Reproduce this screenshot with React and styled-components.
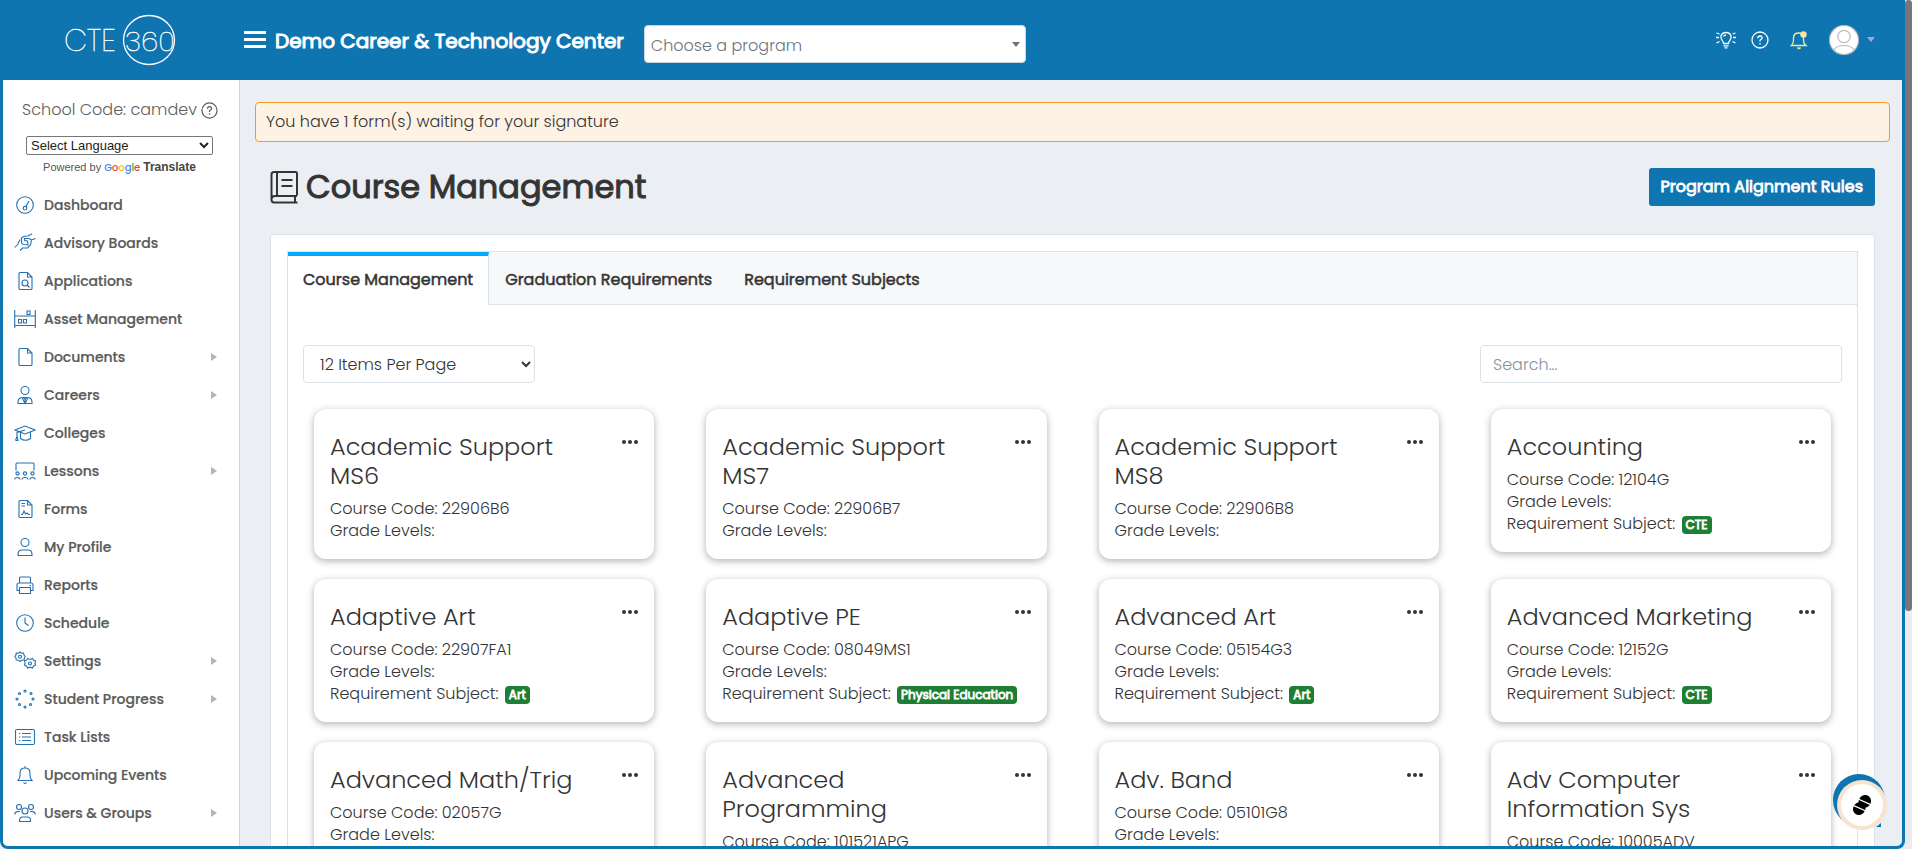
import React, { useState } from 'react';
import styled, { createGlobalStyle } from 'styled-components';

const GlobalStyle = createGlobalStyle`
  *, *::before, *::after {
    box-sizing: border-box;
  }

  body {
    margin: 0;
    background: #e9edf2;
    color: #343434;
    font-family: Poppins, Inter, "Open Sans", sans-serif;
    font-size: 16px;
    font-weight: 300;
    line-height: 24px;
  }

  button, input, select {
    font: inherit;
    color: inherit;
  }

  h1, h2, p, ul {
    margin: 0;
    padding: 0;
  }
`;

const Viewport = styled.div`
  display: flex;
  height: 100vh;
  overflow: hidden;
`;

const Frame = styled.div`
  flex: 1;
  min-width: 0;
  display: flex;
  flex-direction: column;
  border: solid #0f75b1;
  border-width: 0 3px 3px;
  border-radius: 0 0 8px 8px;
  background: #ebeef3;
  overflow: hidden;
`;

const ScrollTrack = styled.div`
  width: 7px;
`;

const ScrollThumb = styled.div`
  height: 72%;
  border-radius: 4px;
  background: #75767b;
`;

const Header = styled.header`
  flex: none;
  display: flex;
  align-items: center;
  height: 80px;
  padding-right: 27px;
  border-bottom: 1px solid #3b5bb5;
  background: #0f75b1;
  color: #fff;
`;

const Brand = styled.a`
  display: flex;
  justify-content: center;
  width: 237px;
  padding-right: 4px;

  text {
    font-family: Poppins, Lato, sans-serif;
    font-weight: 200;
    fill: #fff;
    stroke: #fff;
    stroke-width: 0.4px;
  }
`;

const MenuButton = styled.button`
  display: grid;
  gap: 4px;
  width: 30px;
  padding: 0 4px;
  border: 0;
  background: none;

  span {
    height: 3px;
    background: #fff;
  }
`;

const SchoolName = styled.span`
  padding: 3px 20px 0 5px;
  font-size: 20px;
  font-weight: 400;
  -webkit-text-stroke: 1px;
  white-space: nowrap;
`;

const ProgramSelect = styled.div`
  position: relative;
  width: 382px;
  margin-top: 8px;

  select {
    width: 100%;
    height: 38px;
    padding: 4px 6px 0;
    appearance: none;
    border: 1px solid #c9d6de;
    border-radius: 4px;
    background: #fff;
    color: #6c757d;
  }
`;

const Caret = styled.span`
  border: solid transparent;
  border-width: 5px 4px 0;
  border-top-color: ${(props) => props.$color};
`;

const SelectCaret = styled(Caret)`
  position: absolute;
  top: 17px;
  right: 6px;
  pointer-events: none;
`;

const HeaderTools = styled.div`
  display: flex;
  align-items: center;
  gap: 21px;
  margin-left: auto;
`;

const ToolGroup = styled.div`
  display: flex;
  align-items: center;
  gap: 14px;
`;

const ToolButton = styled.button`
  display: flex;
  align-items: center;
  gap: 8px;
  padding: 0;
  border: 0;
  background: none;
  color: #fff;
`;

const Body = styled.div`
  flex: 1;
  min-height: 0;
  display: flex;
`;

const Sidebar = styled.aside`
  flex: none;
  width: 237px;
  padding-top: 18px;
  border-right: 1px solid #c5d6de;
  background: #fff;
  color: #5a5a5a;
`;

const SchoolCode = styled.p`
  display: flex;
  align-items: center;
  justify-content: center;
  gap: 4px;
  padding-right: 2px;
  color: #5e5e5e;
`;

const Translate = styled.div`
  padding: 14px 26px 0 23px;
  font-family: "Liberation Sans", Arial, sans-serif;
  font-size: 11px;
  font-weight: 400;
  line-height: 24px;
  text-align: center;
  color: #555;

  select {
    display: block;
    width: 100%;
    height: 19px;
    border: 1px solid #767676;
    border-radius: 2px;
    background: #fff;
    color: #222;
    font-size: 13px;
    line-height: 16px;
  }

  b {
    font-size: 12px;
    color: #444;
  }
`;

const GoogleWord = styled.span`
  margin: 0 3px;
  font-family: Poppins, Inter, sans-serif;
  font-size: 10px;
  font-weight: 500;
`;

const Letter = styled.span`
  color: ${(props) => props.$color};
`;

const NavList = styled.ul`
  list-style: none;
  padding-top: 6px;
`;

const NavLink = styled.a`
  display: flex;
  align-items: center;
  gap: 8px;
  height: 38px;
  padding: 0 22px 0 11px;
  color: #5a5a5a;
  font-size: 14px;
  font-weight: 500;
  -webkit-text-stroke: 0.2px;
  text-decoration: none;
`;

const NavIcon = styled.svg`
  flex: none;
  width: 22px;
  height: 20px;
  fill: none;
  stroke: #2470b0;
  stroke-width: 1.1;
`;

const NavArrow = styled.span`
  margin-left: auto;
  border: solid transparent;
  border-width: 4px 0 4px 6px;
  border-left-color: #adb7be;
`;

const Main = styled.main`
  flex: 1;
  min-width: 0;
  padding: 22px 12px 0 15px;
  overflow: hidden;
`;

const Alert = styled.div`
  padding: 7px 10px;
  border: 1px solid #f39a22;
  border-radius: 4px;
  background: #fdf2e4;
`;

const Content = styled.section`
  padding: 26px 15px 0;
`;

const TitleRow = styled.div`
  display: flex;
  align-items: center;
  justify-content: space-between;
  margin-bottom: 28px;
`;

const PageTitle = styled.h1`
  display: flex;
  align-items: center;
  gap: 8px;
  font-size: 32px;
  font-weight: 400;
  -webkit-text-stroke: 1px;
  line-height: 38px;
`;

const PrimaryButton = styled.button`
  height: 38px;
  padding: 0 12px;
  border: 0;
  border-radius: 3px;
  background: #0f75b1;
  color: #fff;
  font-weight: 400;
  -webkit-text-stroke: 0.8px;
`;

const Panel = styled.div`
  padding: 16px;
  border: 1px solid #d8e2e7;
  border-radius: 4px;
  background: #fff;
`;

const Tabs = styled.div`
  display: flex;
  gap: 1px;
  border: 1px solid #d8e2e7;
  border-bottom: 0;
  background: #f6f8fa;
  box-shadow: inset 0 -1px #d8e2e7;
`;

const Tab = styled.button`
  height: 53px;
  padding: 0 15px 2px;
  border: solid transparent;
  border-width: 4px 1px 0 0;
  background: none;
  font-weight: 400;
  -webkit-text-stroke: 0.5px;

  &[aria-selected='true'] {
    border-color: #00a8ff #d8e2e7 transparent;
    background: #fff;
  }
`;

const TabPanel = styled.div`
  padding-top: 40px;
  border: solid #d8e2e7;
  border-width: 0 1px;
`;

const Filters = styled.div`
  display: flex;
  justify-content: space-between;
  padding: 0 15px;
`;

const PageSize = styled.select`
  width: 232px;
  height: 38px;
  padding: 0 0 0 12px;
  border: 1px solid #d8e2e7;
  border-radius: 4px;
  background: #fff;
`;

const SearchInput = styled.input`
  width: 362px;
  height: 38px;
  padding: 0 12px;
  border: 1px solid #d8e2e7;
  border-radius: 4px;

  &::placeholder {
    color: #84949e;
    opacity: 1;
  }
`;

const CardGrid = styled.div`
  display: grid;
  grid-template-columns: repeat(4, minmax(0, 1fr));
  align-items: start;
  gap: 20px 52px;
  padding: 26px;
`;

const Card = styled.article`
  display: flex;
  align-items: flex-start;
  justify-content: space-between;
  padding: 23px 16px 17px;
  border-radius: 12px;
  box-shadow: 0 2px 6px 1px rgba(80, 95, 110, 0.38);
`;

const CardTitle = styled.h2`
  margin-bottom: 8px;
  max-width: 250px;
  font-size: 24px;
  font-weight: 300;
  line-height: 29px;
`;

const CardLine = styled.p`
  line-height: 22px;
  white-space: nowrap;
`;

const Badge = styled.span`
  display: inline-block;
  margin-left: 2px;
  padding: 0 4px;
  border-radius: 4px;
  background: #1e7e34;
  color: #fff;
  font-size: 12px;
  font-weight: 400;
  -webkit-text-stroke: 0.8px;
  line-height: 18px;
`;

const MoreButton = styled.button`
  display: flex;
  gap: 2px;
  margin: 8px 0 0 -32px;
  padding: 0;
  border: 0;
  background: none;

  span {
    width: 4px;
    height: 4px;
    border-radius: 50%;
    background: #343434;
  }
`;

const HelpWidget = styled.button`
  position: fixed;
  right: 25px;
  bottom: 18px;
  width: 54px;
  height: 57px;
  padding: 0;
  border: 0;
  background: none;
`;

const icons = {
  dashboard: (
    <>
      <circle cx="11" cy="10" r="8.3" />
      <circle cx="11" cy="13.2" r="1.8" />
      <path d="M11.8 11.6 15 6.2" />
    </>
  ),
  boards: (
    <path d="M.8 14.5 4 11 6 6.5M9.5 3.5l4-.5L17 1.5l.8-1M9.5 3.5l-2 1.5v4q0 2 2 2.500l4.500.5-.5-4-3-.5v-2H15L17.500 7l4-1.500M17.500 7l-1 5-3 3h-5L6 17.500" />
  ),
  applications: (
    <>
      <path d="M6 1.5h7.5L18 6v11.5q0 1-1 1H6q-1 0-1-1v-15q0-1 1-1zM13.5 1.5V6H18" />
      <circle cx="11" cy="12" r="3" />
      <path d="m13 14 2.5 2.5" />
    </>
  ),
  assets: <path d="M.7 1v18M21.3 1v18M.7 7h20.6M.7 16.5h20.6M13 2h3v3.5h-3zM4.5 10.5h3V14h-3zM9.5 10.5h3V14h-3z" />,
  documents: <path d="M6 1.5h7.5L18 6v11.5q0 1-1 1H6q-1 0-1-1v-15q0-1 1-1zM13.5 1.5V6H18" />,
  careers: (
    <>
      <circle cx="11" cy="5.5" r="4" />
      <path d="M4 18.5V17q0-4 4-4.5l3 6 3-6q4 .5 4 4.5v1.5zM9.5 12.5h3L11 14.5zM11 14.5v3" />
    </>
  ),
  colleges: (
    <path d="M1 7 11 3l10 4-10 4zM6.5 9.5v6q5 3.5 10 0v-6M11 7 3 9.5v4l-1.5 4M3 13.5l1 4H1.5" />
  ),
  lessons: (
    <>
      <path d="M2 9.5V3q0-1 1-1h16q1 0 1 1v6.5" />
      <circle cx="3.5" cy="12.5" r="1.6" />
      <circle cx="11" cy="12.5" r="1.6" />
      <circle cx="18.5" cy="12.5" r="1.6" />
      <path d="M.7 18.5q0-2 2.5-2t2.8 2M8 18.5q0-2 3-2t3 2M16 18.5q0-2 2.5-2t2.8 2" />
    </>
  ),
  forms: <path d="M6 1.5h7.5L18 6v11.5q0 1-1 1H6q-1 0-1-1v-15q0-1 1-1zM13.5 1.5V6H18M7.5 4.5H11M7.5 7H11M7 15.5h1.5l1.5-3.5 1.5 3 1.5-1 1.5 1.5H16" />,
  profile: (
    <>
      <circle cx="11" cy="5.5" r="4" />
      <path d="M4 18.5v-1q0-4.5 4-4.5h6q4 0 4 4.5v1z" />
    </>
  ),
  reports: <path d="M5.5 8V3q0-1 1-1h9q1 0 1 1v5M5.5 15.5H3V10q0-2 2-2h12q2 0 2 2v5.5h-2.5M5.5 12.5h11v6h-11zM15.5 10.5H17" />,
  schedule: (
    <>
      <circle cx="11" cy="10" r="8.3" />
      <path d="M11 4.5V10l3.5 2.5" />
    </>
  ),
  settings: (
    <>
      <path d="m6 1 1.5 1.2 2-.2.5 2 1.2 1.5L10.5 7l-.5 2-2 .2-2 1.3-1.500-1.300L2.200 9 2 7 .8 5.500 2 4l.2-2 2.300.2z" />
      <circle cx="6" cy="5.7" r="1.5" />
      <path d="m13.5 7.5 1.8.8h1.5l1.7-.8 1.2 1.7 1.8.5-.5 2.5.5 2-2 .8-1 2-1.8-.6h-1.5l-1.7.6-1-2-2-.8.5-2-.5-2.5 1.8-.5z" />
      <circle cx="16" cy="12.5" r="1.5" />
    </>
  ),
  progress: (
    <>
      {[[11, 2], [17, 4.5], [19, 10], [16.5, 15.5], [11, 18], [5.5, 15.5], [3, 10], [5.5, 4.5]].map(([x, y]) => (
        <circle key={`${x}-${y}`} cx={x} cy={y} r="1" />
      ))}
    </>
  ),
  tasks: (
    <>
      <rect x="1.5" y="2.5" width="19" height="15" rx="1.5" />
      <path d="M8 6.5h9M8 10h9M8 13.5h9M5 6.5h1.2M5 10h1.2M5 13.5h1.2" />
    </>
  ),
  bell: <path d="M11 1v2M4 15.5q2-2 2-5V8q0-5 5-5t5 5v2.5q0 3 2 5zM9.5 17.5q1.5 2 3 0" />,
  users: (
    <>
      <circle cx="5" cy="4" r="2.5" />
      <circle cx="17" cy="4" r="2.5" />
      <circle cx="11" cy="8" r="3" />
      <path d="M5.5 18.5v-1Q5.5 14 9 14h4q3.500 0 3.500 3.500v1zM.7 11.500q.3-3 3.300-3h2M21.300 11.500q-.3-3-3.300-3h-2" />
    </>
  ),
};

const navItems = [
  { label: 'Dashboard', icon: 'dashboard' },
  { label: 'Advisory Boards', icon: 'boards' },
  { label: 'Applications', icon: 'applications' },
  { label: 'Asset Management', icon: 'assets' },
  { label: 'Documents', icon: 'documents', nested: true },
  { label: 'Careers', icon: 'careers', nested: true },
  { label: 'Colleges', icon: 'colleges' },
  { label: 'Lessons', icon: 'lessons', nested: true },
  { label: 'Forms', icon: 'forms' },
  { label: 'My Profile', icon: 'profile' },
  { label: 'Reports', icon: 'reports' },
  { label: 'Schedule', icon: 'schedule' },
  { label: 'Settings', icon: 'settings', nested: true },
  { label: 'Student Progress', icon: 'progress', nested: true },
  { label: 'Task Lists', icon: 'tasks' },
  { label: 'Upcoming Events', icon: 'bell' },
  { label: 'Users & Groups', icon: 'users', nested: true },
];

const tabs = ['Course Management', 'Graduation Requirements', 'Requirement Subjects'];

const courses = [
  { title: 'Academic Support MS6', code: '22906B6' },
  { title: 'Academic Support MS7', code: '22906B7' },
  { title: 'Academic Support MS8', code: '22906B8' },
  { title: 'Accounting', code: '12104G', subject: 'CTE' },
  { title: 'Adaptive Art', code: '22907FA1', subject: 'Art' },
  { title: 'Adaptive PE', code: '08049MS1', subject: 'Physical Education' },
  { title: 'Advanced Art', code: '05154G3', subject: 'Art' },
  { title: 'Advanced Marketing', code: '12152G', subject: 'CTE' },
  { title: 'Advanced Math/Trig', code: '02057G' },
  { title: 'Advanced Programming', code: '101521APG' },
  { title: 'Adv. Band', code: '05101G8' },
  { title: 'Adv Computer Information Sys', code: '10005ADV' },
];

const googleLetters = [
  ['G', '#4285f4'],
  ['o', '#ea4335'],
  ['o', '#fbbc05'],
  ['g', '#4285f4'],
  ['l', '#34a853'],
  ['e', '#ea4335'],
];

const Logo = () => (
  <svg width="112" height="52" viewBox="0 0 112 52" aria-label="CTE 360">
    <text x="0" y="37" fontSize="30">CTE</text>
    <text x="61" y="37" fontSize="28">360</text>
    <ellipse cx="85" cy="26" rx="25.5" ry="24.5" fill="none" stroke="#fff" strokeWidth="1.3" />
  </svg>
);

const QuestionIcon = ({ size }) => (
  <svg width={size} height={size} viewBox="0 0 18 18" fill="none" stroke="currentColor" strokeWidth="1.3">
    <circle cx="9" cy="9" r="8" />
    <path d="M6.8 7.2Q7 5 9 5t2.2 1.8Q11.2 8 9 9.2v1.3M9 12v1.5" />
  </svg>
);

const BulbIcon = () => (
  <svg width="22" height="18" viewBox="0 0 22 18" fill="none" stroke="#fff" strokeWidth="1.3">
    <path d="M8.5 12.5Q8.5 11 7 9.2 5.5 7.5 6 5q1-3.5 5-3.500T16 5q.5 2.500-1 4.200-1.500 1.800-1.500 3.300zM8.500 14.800h5M9.500 16.800h3M8.500 5.500q.7-1.500 2.500-1.500M1 6.500h3M18 6.500h3M1.500 2l3 1M20.500 2l-3 1M1.500 12l3-1.500M20.500 12l-3-1.500" />
  </svg>
);

const AlertBellIcon = () => (
  <svg width="18" height="20" viewBox="0 0 18 20">
    <path d="M1.5 15.5q2-2 2-5V8q0-5 5-5t5 5v2.5q0 3 2.5 5zM7.5 17.5q1.5 2 3 0" fill="none" stroke="#f5ec8e" strokeWidth="1.3" />
    <circle cx="13.5" cy="4.5" r="3.2" fill="#ffe1a3" />
  </svg>
);

const Avatar = () => (
  <svg width="30" height="30" viewBox="0 0 30 30" fill="none" stroke="#b4bac0" strokeWidth="1.2">
    <circle cx="15" cy="15" r="14.5" fill="#fff" />
    <circle cx="15" cy="11.5" r="6.2" />
    <path d="M4.5 25Q8 20.5 15 20.5T25.5 25" />
  </svg>
);

const BookIcon = () => (
  <svg width="28" height="34" viewBox="0 0 28 34" fill="none" stroke="#343434" strokeWidth="2">
    <path d="M27 25.5v-22Q27 2 25.5 2H4Q1.5 2 1.5 4.5v25q0 3 2.5 3h23.5M1.5 29.5Q1.5 26 5 26h22M25 26v6M7 2v24M11.5 10h11M11.5 16h11" />
  </svg>
);

const WidgetIcon = () => (
  <svg width="54" height="57" viewBox="0 0 54 57">
    <circle cx="26" cy="26" r="26" fill="#0f75b1" />
    <path d="M48 49v4h-5z" fill="#0f75b1" />
    <circle cx="29" cy="31" r="25" fill="#f6e4ce" />
    <circle cx="29" cy="31" r="21" fill="#fff" />
    <g transform="rotate(-52 29 31)">
      <rect x="18" y="25" width="13" height="12" rx="6" />
      <rect x="27" y="25" width="13" height="12" rx="6" />
      <path d="m23 23 4 16M31 23l4 16" stroke="#fff" strokeWidth="1.3" />
    </g>
  </svg>
);

const CourseCard = ({ course }) => (
  <Card>
    <div>
      <CardTitle>{course.title}</CardTitle>
      <CardLine>Course Code: {course.code}</CardLine>
      <CardLine>Grade Levels:</CardLine>
      {course.subject && (
        <CardLine>
          Requirement Subject: <Badge>{course.subject}</Badge>
        </CardLine>
      )}
    </div>
    <MoreButton type="button" aria-label="Course options">
      <span />
      <span />
      <span />
    </MoreButton>
  </Card>
);

const App = () => {
  const [activeTab, setActiveTab] = useState(tabs[0]);
  const [search, setSearch] = useState('');

  const visibleCourses = courses.filter((course) =>
    course.title.toLowerCase().includes(search.toLowerCase())
  );

  return (
    <Viewport>
      <GlobalStyle />
      <Frame>
        <Header>
          <Brand href="#home">
            <Logo />
          </Brand>
          <MenuButton type="button" aria-label="Toggle menu">
            <span />
            <span />
            <span />
          </MenuButton>
          <SchoolName>Demo Career &amp; Technology Center</SchoolName>
          <ProgramSelect>
            <select aria-label="Program">
              <option>Choose a program</option>
            </select>
            <SelectCaret $color="#6c757d" />
          </ProgramSelect>
          <HeaderTools>
            <ToolGroup>
              <ToolButton type="button" aria-label="Ideas"><BulbIcon /></ToolButton>
              <ToolButton type="button" aria-label="Help"><QuestionIcon size={18} /></ToolButton>
            </ToolGroup>
            <ToolButton type="button" aria-label="Notifications"><AlertBellIcon /></ToolButton>
            <ToolButton type="button" aria-label="Account">
              <Avatar />
              <Caret $color="#a9a6dc" />
            </ToolButton>
          </HeaderTools>
        </Header>
        <Body>
          <Sidebar>
            <SchoolCode>
              School Code: camdev <QuestionIcon size={17} />
            </SchoolCode>
            <Translate>
              <select aria-label="Language">
                <option>Select Language</option>
              </select>
              Powered by
              <GoogleWord>
                {googleLetters.map(([letter, color], index) => (
                  <Letter key={index} $color={color}>{letter}</Letter>
                ))}
              </GoogleWord>
              <b>Translate</b>
            </Translate>
            <nav>
              <NavList>
                {navItems.map((item) => (
                  <li key={item.label}>
                    <NavLink href="#">
                      <NavIcon viewBox="0 0 22 20">{icons[item.icon]}</NavIcon>
                      {item.label}
                      {item.nested && <NavArrow />}
                    </NavLink>
                  </li>
                ))}
              </NavList>
            </nav>
          </Sidebar>
          <Main>
            <Alert>You have 1 form(s) waiting for your signature</Alert>
            <Content>
              <TitleRow>
                <PageTitle>
                  <BookIcon />
                  Course Management
                </PageTitle>
                <PrimaryButton type="button">Program Alignment Rules</PrimaryButton>
              </TitleRow>
              <Panel>
                <Tabs role="tablist">
                  {tabs.map((tab) => (
                    <Tab
                      key={tab}
                      type="button"
                      role="tab"
                      aria-selected={tab === activeTab}
                      onClick={() => setActiveTab(tab)}
                    >
                      {tab}
                    </Tab>
                  ))}
                </Tabs>
                <TabPanel role="tabpanel">
                  <Filters>
                    <PageSize aria-label="Items per page">
                      <option>12 Items Per Page</option>
                    </PageSize>
                    <SearchInput
                      type="text"
                      aria-label="Search courses"
                      placeholder="Search..."
                      value={search}
                      onChange={(e) => setSearch(e.target.value)}
                    />
                  </Filters>
                  <CardGrid>
                    {visibleCourses.map((course) => (
                      <CourseCard key={course.code} course={course} />
                    ))}
                  </CardGrid>
                </TabPanel>
              </Panel>
            </Content>
          </Main>
        </Body>
      </Frame>
      <ScrollTrack>
        <ScrollThumb />
      </ScrollTrack>
      <HelpWidget type="button" aria-label="Open assistant">
        <WidgetIcon />
      </HelpWidget>
    </Viewport>
  );
};

export default App;
